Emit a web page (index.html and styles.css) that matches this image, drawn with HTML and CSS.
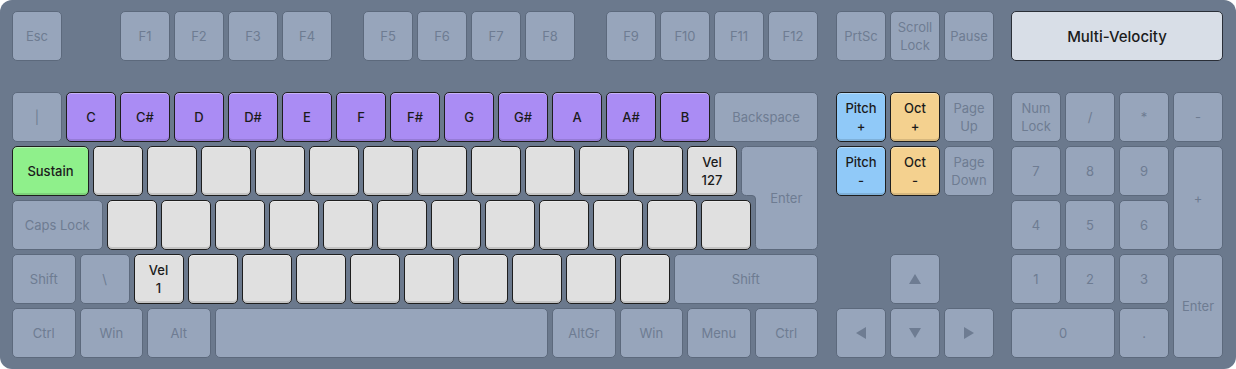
FILE: index.html
```html
<!DOCTYPE html>
<html lang="en">
<head>
    <meta charset="UTF-8">
    <meta name="viewport" content="width=device-width, initial-scale=1.0">
    <title>Computer MIDI Keyboard</title>
    <link rel="stylesheet" href="styles.css">
</head>
<body>
    <div class="board">
        <!-- ファンクション列 -->
        <div class="fn-row">
            <div class="cluster-main fn-grid">
                <div class="key u1">Esc</div>
                <div class="key f1">F1</div>
                <div class="key u1">F2</div>
                <div class="key u1">F3</div>
                <div class="key u1">F4</div>
                <div class="key f5">F5</div>
                <div class="key u1">F6</div>
                <div class="key u1">F7</div>
                <div class="key u1">F8</div>
                <div class="key f9">F9</div>
                <div class="key u1">F10</div>
                <div class="key u1">F11</div>
                <div class="key u1">F12</div>
            </div>
            <div class="cluster-nav nav-grid fn-nav">
                <div class="key">PrtSc</div>
                <div class="key">Scroll<br>Lock</div>
                <div class="key">Pause</div>
            </div>
            <div class="cluster-num">
                <button class="mode-button">Multi-Velocity</button>
            </div>
        </div>

        <!-- メインキー -->
        <div class="key-rows">
            <div class="cluster-main main-grid">
                <div class="key u1">|</div>
                <div class="key u1 note">C</div>
                <div class="key u1 note">C#</div>
                <div class="key u1 note">D</div>
                <div class="key u1 note">D#</div>
                <div class="key u1 note">E</div>
                <div class="key u1 note">F</div>
                <div class="key u1 note">F#</div>
                <div class="key u1 note">G</div>
                <div class="key u1 note">G#</div>
                <div class="key u1 note">A</div>
                <div class="key u1 note">A#</div>
                <div class="key u1 note">B</div>
                <div class="key u2">Backspace</div>

                <div class="key u15 sustain">Sustain</div>
                <div class="key u1 blank"></div>
                <div class="key u1 blank"></div>
                <div class="key u1 blank"></div>
                <div class="key u1 blank"></div>
                <div class="key u1 blank"></div>
                <div class="key u1 blank"></div>
                <div class="key u1 blank"></div>
                <div class="key u1 blank"></div>
                <div class="key u1 blank"></div>
                <div class="key u1 blank"></div>
                <div class="key u1 blank"></div>
                <div class="key u1 blank">Vel<br>127</div>
                <div class="key key-enter">
                    <svg class="enter-shape" width="77" height="104" viewBox="0 0 77 104">
                        <path d="M5.5 0.5 H71.5 Q76.5 0.5 76.5 5.5 V98.5 Q76.5 103.5 71.5 103.5 H19.5 Q14.5 103.5 14.5 98.5 V53 Q14.5 49.5 11 49.5 H5.5 Q0.5 49.5 0.5 44.5 V5.5 Q0.5 0.5 5.5 0.5 Z"/>
                    </svg>
                    <span class="enter-label">Enter</span>
                </div>

                <div class="key u175">Caps Lock</div>
                <div class="key u1 blank"></div>
                <div class="key u1 blank"></div>
                <div class="key u1 blank"></div>
                <div class="key u1 blank"></div>
                <div class="key u1 blank"></div>
                <div class="key u1 blank"></div>
                <div class="key u1 blank"></div>
                <div class="key u1 blank"></div>
                <div class="key u1 blank"></div>
                <div class="key u1 blank"></div>
                <div class="key u1 blank"></div>
                <div class="key u1 blank"></div>

                <div class="key u125">Shift</div>
                <div class="key u1">\</div>
                <div class="key u1 blank">Vel<br>1</div>
                <div class="key u1 blank"></div>
                <div class="key u1 blank"></div>
                <div class="key u1 blank"></div>
                <div class="key u1 blank"></div>
                <div class="key u1 blank"></div>
                <div class="key u1 blank"></div>
                <div class="key u1 blank"></div>
                <div class="key u1 blank"></div>
                <div class="key u1 blank"></div>
                <div class="key u275">Shift</div>

                <div class="key u125">Ctrl</div>
                <div class="key u125">Win</div>
                <div class="key u125">Alt</div>
                <div class="key u625"></div>
                <div class="key u125">AltGr</div>
                <div class="key u125">Win</div>
                <div class="key u125">Menu</div>
                <div class="key u125">Ctrl</div>
            </div>

            <div class="cluster-nav nav-grid">
                <div class="key pitch">Pitch<br>+</div>
                <div class="key octave">Oct<br>+</div>
                <div class="key">Page<br>Up</div>
                <div class="key pitch">Pitch<br>-</div>
                <div class="key octave">Oct<br>-</div>
                <div class="key">Page<br>Down</div>
                <div class="key arrow-up"><span class="tri tri-up"></span></div>
                <div class="key arrow-row"><span class="tri tri-left"></span></div>
                <div class="key arrow-row"><span class="tri tri-down"></span></div>
                <div class="key arrow-row"><span class="tri tri-right"></span></div>
            </div>

            <div class="cluster-num num-grid">
                <div class="key">Num<br>Lock</div>
                <div class="key">/</div>
                <div class="key">*</div>
                <div class="key">-</div>
                <div class="key">7</div>
                <div class="key">8</div>
                <div class="key">9</div>
                <div class="key tall">+</div>
                <div class="key">4</div>
                <div class="key">5</div>
                <div class="key">6</div>
                <div class="key">1</div>
                <div class="key">2</div>
                <div class="key">3</div>
                <div class="key tall">Enter</div>
                <div class="key wide">0</div>
                <div class="key">.</div>
            </div>
        </div>
    </div>
</body>
</html>
```

FILE: styles.css
```css
/* 全体 */
* {
    margin: 0;
    padding: 0;
    box-sizing: border-box;
}

body {
    font-family: Inter, "Noto Sans", sans-serif;
    font-size: 13px;
    background: #ffffff;
    width: 1236px;
    height: 369px;
    overflow: hidden;
}

/* キーボード本体 */
.board {
    width: 1236px;
    height: 369px;
    background: #6b798d;
    border-radius: 12px;
    padding: 11px 13px 11px 12px;
    display: flex;
    flex-direction: column;
    gap: 31px;
}

.fn-row,
.key-rows {
    display: flex;
}

.cluster-main {
    width: 806px;
    margin-right: 18px;
}

.cluster-nav {
    width: 158px;
    margin-right: 17px;
}

.cluster-num {
    width: 212px;
}

/* グリッド (1キー = 4列) */
.fn-grid,
.main-grid {
    display: grid;
    grid-template-columns: repeat(60, 9.5px);
    grid-auto-rows: 50px;
    gap: 4px;
}

.u1 { grid-column: span 4; }
.u125 { grid-column: span 5; }
.u15 { grid-column: span 6; }
.u175 { grid-column: span 7; }
.u2 { grid-column: span 8; }
.u275 { grid-column: span 11; }
.u625 { grid-column: span 25; }

/* ファンクションキーのグループ間隔 */
.f1 { grid-column: 9 / span 4; }
.f5 { grid-column: 27 / span 4; }
.f9 { grid-column: 45 / span 4; }

.nav-grid {
    display: grid;
    grid-template-columns: repeat(3, 50px);
    grid-template-rows: repeat(5, 50px);
    gap: 4px;
}

.fn-nav {
    grid-template-rows: 50px;
}

.num-grid {
    display: grid;
    grid-template-columns: repeat(4, 50px);
    grid-template-rows: repeat(5, 50px);
    gap: 4px;
}

.tall { grid-row: span 2; }
.wide { grid-column: span 2; }

.arrow-up {
    grid-row: 4;
    grid-column: 2;
}

.arrow-row {
    grid-row: 5;
}

/* キー */
.key {
    display: flex;
    align-items: center;
    justify-content: center;
    text-align: center;
    line-height: 18px;
    background: #97a5bb;
    color: #6e7c92;
    border: 1px solid #5c697c;
    border-radius: 5px;
}

.note,
.sustain,
.blank,
.pitch,
.octave {
    color: #1b1b1b;
    font-weight: 500;
    border-color: #1e1e1e;
    box-shadow: inset 0 -2px 0 rgba(0, 0, 0, 0.12), inset 0 1px 0 rgba(255, 255, 255, 0.35);
}

.note { background: #aa8cf4; }
.sustain { background: #8ff08b; }
.blank { background: #e0e0e0; }
.pitch { background: #90c9f8; }
.octave { background: #f4d18f; }

/* ISO Enter */
.key-enter {
    grid-column: 56 / 61;
    grid-row: 2 / 4;
    margin-left: -14px;
    position: relative;
    background: none;
    border: none;
    padding-left: 14px;
}

.enter-shape {
    position: absolute;
    left: 0;
    top: 0;
}

.enter-shape path {
    fill: #97a5bb;
    stroke: #5c697c;
    stroke-width: 1;
}

.enter-label {
    position: relative;
}

/* 矢印 */
.tri {
    width: 0;
    height: 0;
    border-style: solid;
}

.tri-up {
    border-width: 0 6px 10px 6px;
    border-color: transparent transparent #6e7c92 transparent;
}

.tri-down {
    border-width: 10px 6px 0 6px;
    border-color: #6e7c92 transparent transparent transparent;
}

.tri-left {
    border-width: 6px 10px 6px 0;
    border-color: transparent #6e7c92 transparent transparent;
}

.tri-right {
    border-width: 6px 0 6px 10px;
    border-color: transparent transparent transparent #6e7c92;
}

/* モードボタン */
.mode-button {
    width: 100%;
    height: 50px;
    font-family: inherit;
    font-size: 15px;
    font-weight: 500;
    color: #1b1b1b;
    background: #d8dee7;
    border: 1px solid #2a2f38;
    border-radius: 5px;
}
```
